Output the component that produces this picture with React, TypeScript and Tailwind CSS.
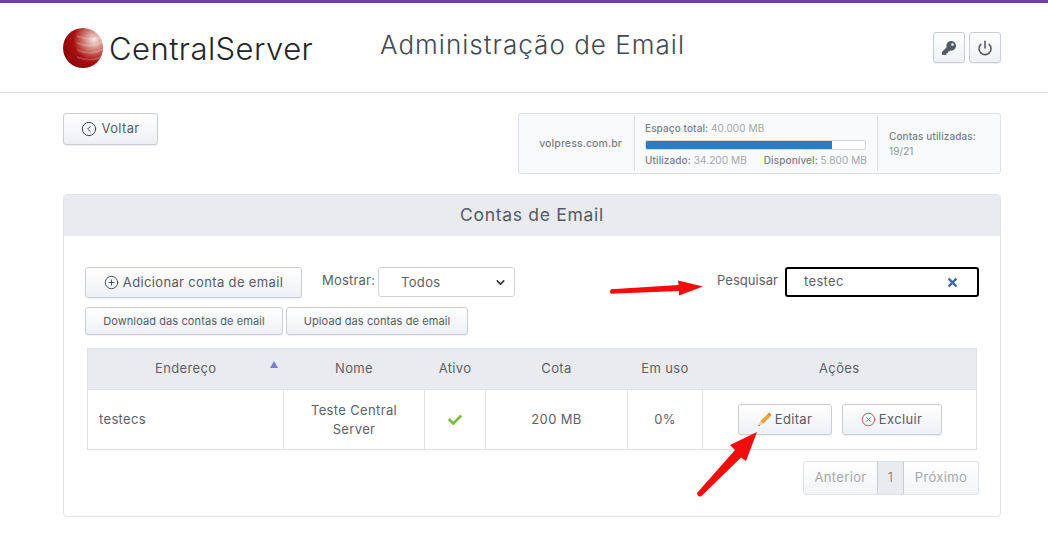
import { ChevronDown, CircleChevronLeft, CirclePlus, CircleX, Power } from 'lucide-react';
import { FaCheck, FaKey, FaTimes } from 'react-icons/fa';

const btn =
  'inline-flex items-center justify-center rounded-[3px] border border-[#c9ced6] bg-gradient-to-b from-white to-[#eef0f4] text-[#565b66] shadow-[0_1px_1px_rgba(0,0,0,0.06)]';

const Logo = () => (
  <div className="flex items-center">
    <svg width="40" height="40" viewBox="0 0 40 40">
      <defs>
        <radialGradient id="ball" cx="78%" cy="30%" r="85%">
          <stop offset="0%" stopColor="#f6e4e0" />
          <stop offset="30%" stopColor="#d2807a" />
          <stop offset="62%" stopColor="#a80f10" />
          <stop offset="100%" stopColor="#8a0607" />
        </radialGradient>
        <clipPath id="ballClip">
          <circle cx="20" cy="20" r="20" />
        </clipPath>
      </defs>
      <circle cx="20" cy="20" r="20" fill="url(#ball)" />
      <g clipPath="url(#ballClip)" fill="none" stroke="#ffffff" strokeOpacity="0.2" strokeWidth="1.6">
        <path d="M14 8 Q28 14 40 8" />
        <path d="M14 15 Q28 21 40 14" />
        <path d="M14 22 Q28 28 40 21" />
        <path d="M14 29 Q28 35 40 28" />
      </g>
    </svg>
    <span className="ml-[6px] text-[31px] leading-none tracking-[0.45px] text-[#24262b] [font-family:Inter,sans-serif] font-light">
      CentralServer
    </span>
  </div>
);

const Pencil = () => (
  <svg width="15" height="15" viewBox="0 0 14 14">
    <path d="M3 8.6 L9.8 1.8 L12.4 4.4 L5.6 11.2 Z" fill="#e9a83c" />
    <path d="M9.8 1.8 L10.7 0.9 Q11.3 0.5 11.9 1 L13 2.1 Q13.4 2.7 13 3.3 L12.4 4.4 Z" fill="#d98a2e" />
    <path d="M3 8.6 L5.6 11.2 L1 13.2 Z" fill="#e8d3a8" />
    <path d="M1.9 11.7 L2.6 12.5 L1 13.2 Z" fill="#555" />
  </svg>
);

const App = () => {
  return (
    <div className="relative h-[542px] w-[1048px] overflow-hidden bg-white tracking-[0.35px] text-[#5c616b] [font-family:Inter,'Liberation_Sans',sans-serif]">
      <div className="h-[3px] bg-[#6f42a6]" />
      <header className="flex h-[90px] items-start border-b border-[#dddddd] pl-[63px] pr-[47px]">
        <div className="mt-[25px] w-[317px]">
          <Logo />
        </div>
        <h1 className="mt-[25px] text-[26px] leading-[34px] font-light tracking-[1.03px] text-[#424955]">
          Administração de Email
        </h1>
        <div className="mt-[29px] ml-auto flex gap-[4px]">
          <button className={`${btn} h-[31px] w-[32px] text-[#3f4654]`}>
            <FaKey size={14} />
          </button>
          <button className={`${btn} h-[31px] w-[32px] text-[#3f4654]`}>
            <Power size={16} strokeWidth={2.4} />
          </button>
        </div>
      </header>

      <main className="pr-[47px] pl-[63px]">
        <div className="mt-[20px] flex items-start justify-between">
          <button className={`${btn} h-[32px] w-[95px] gap-[4px] text-[13px]`}>
            <CircleChevronLeft size={16} strokeWidth={1.5} className="text-[#3f4654]" />
            Voltar
          </button>
          <div className="flex h-[61px] w-[483px] items-center rounded-[3px] border border-[#dfe2e7] bg-[#f9fafc] py-[2px] text-[10px] font-medium tracking-[0.1px] text-[#7a7e85]">
            <div className="w-[115px] pr-[12px] text-right text-[10.5px]">volpress.com.br</div>
            <div className="flex h-full w-[244px] flex-col border-x border-[#d8dbe0] px-[10px] pt-[6px]">
              <div className="leading-[13px]">
                Espaço total: <span className="font-normal text-[#a3a6ab]">40.000 MB</span>
              </div>
              <div className="mt-[5px] h-[10px] w-[221px] overflow-hidden rounded-[2px] border border-[#d6d8dc] bg-white">
                <div className="h-full w-[85%] bg-[#337ab7]" />
              </div>
              <div className="mt-[4px] flex w-[222px] justify-between leading-[13px]">
                <span>
                  Utilizado: <span className="font-normal text-[#a3a6ab]">34.200 MB</span>
                </span>
                <span>
                  Disponível: <span className="font-normal text-[#a3a6ab]">5.800 MB</span>
                </span>
              </div>
            </div>
            <div className="pl-[11px] leading-[15px]">
              <div>Contas utilizadas:</div>
              <div className="font-normal text-[#8d9096]">19/21</div>
            </div>
          </div>
        </div>

        <section className="mt-[20px] h-[323px] rounded-[4px] border border-[#dfe2e7]">
          <div className="flex h-[41px] items-center justify-center bg-[#e9ebf0] text-[17.5px] tracking-[0.7px] text-[#555a64]">
            Contas de Email
          </div>

          <div className="flex justify-between pt-[31px] pr-[21px] pl-[21px]">
            <div>
              <div className="flex items-start">
                <button className={`${btn} h-[31px] w-[217px] gap-[4px] text-[13px]`}>
                  <CirclePlus size={15} strokeWidth={1.5} className="text-[#3f4654]" />
                  Adicionar conta de email
                </button>
                <span className="ml-[20px] w-[56px] text-[13px] leading-[26px] tracking-[0.2px]">Mostrar:</span>
                <div className="relative h-[30px] w-[137px] rounded-[3px] border border-[#d0d3d8] bg-white pt-[1px] text-[13px]">
                  <select className="h-full w-full appearance-none bg-transparent pl-[22px] outline-none">
                    <option>Todos</option>
                  </select>
                  <ChevronDown size={13} strokeWidth={3} className="pointer-events-none absolute top-[8px] right-[7px] text-[#333]" />
                </div>
              </div>
              <div className="mt-[9px] flex gap-[3px] text-[11px] tracking-[0.1px]">
                <button className={`${btn} h-[28px] w-[198px]`}>Download das contas de email</button>
                <button className={`${btn} h-[28px] w-[182px]`}>Upload das contas de email</button>
              </div>
            </div>
            <div className="flex items-start">
              <span className="mr-[7px] text-[13px] leading-[26px] tracking-[0.05px]">Pesquisar</span>
              <div className="flex h-[30px] w-[194px] items-center justify-between rounded-[3px] border-2 border-black pr-[18px] pl-[17px] text-[13px]">
                testec
                <FaTimes size={13} className="text-[#44699b]" />
              </div>
            </div>
          </div>

          <div className="mx-[23px] mt-[13px]">
            <table className="w-[890px] table-fixed border-collapse border border-[#dfe2e7] text-[13px]">
              <colgroup>
                <col className="w-[196px]" />
                <col className="w-[141px]" />
                <col className="w-[61px]" />
                <col className="w-[142px]" />
                <col className="w-[75px]" />
                <col />
              </colgroup>
              <thead>
                <tr className="h-[41px] bg-[#e9ebf0] font-normal">
                  <th className="relative font-normal">
                    Endereço
                    <span className="absolute top-[12px] right-[6px] h-0 w-0 border-x-[4px] border-b-[7px] border-x-transparent border-b-[#7b7bd1]" />
                  </th>
                  <th className="font-normal">Nome</th>
                  <th className="font-normal">Ativo</th>
                  <th className="font-normal">Cota</th>
                  <th className="font-normal">Em uso</th>
                  <th className="font-normal">Ações</th>
                </tr>
              </thead>
              <tbody>
                <tr className="h-[60px] [&>td]:border [&>td]:border-[#dfe2e7]">
                  <td className="pl-[11px]">testecs</td>
                  <td className="px-[20px] text-center leading-[19px]">Teste Central Server</td>
                  <td>
                    <FaCheck size={14} className="mx-auto text-[#7fbf3f]" />
                  </td>
                  <td className="text-center">200 MB</td>
                  <td className="text-center">0%</td>
                  <td>
                    <div className="flex justify-center gap-[10px]">
                      <button className={`${btn} h-[31px] w-[94px] gap-[3px]`}>
                        <Pencil />
                        Editar
                      </button>
                      <button className={`${btn} h-[31px] w-[100px] gap-[3px]`}>
                        <CircleX size={15} strokeWidth={1.5} className="text-[#c9474a]" />
                        Excluir
                      </button>
                    </div>
                  </td>
                </tr>
              </tbody>
            </table>
            <div className="mt-[11px] -mr-[2px] flex justify-end">
              <div className="flex h-[34px] w-[176px] overflow-hidden rounded-[3px] border border-[#dfe2e7] bg-gradient-to-b from-white to-[#f1f3f6] text-[13px] text-[#a5a8ad]">
                <span className="flex w-[73px] items-center justify-center">Anterior</span>
                <span className="flex w-[27px] items-center justify-center border-x border-[#c9ced6] bg-[#e9ebf0] font-light text-[#6d7178]">1</span>
                <span className="flex flex-1 items-center justify-center">Próximo</span>
              </div>
            </div>
          </div>
        </section>
      </main>

      {/* setas vermelhas da anotacao */}
      <svg className="absolute top-0 left-0" width="1048" height="542" viewBox="0 0 1048 542" fill="#f30d0d" pointerEvents="none">
        <path d="M611 289.2 Q609 291.5 611 293.8 L679 291 L679 295.5 L703 286.5 L678 280.5 L678.6 285 Z" />
        <path d="M697 493 Q697.5 497 701 496.5 L741 457.5 L746 461 L757 432 L730 445 L735 450 Z" />
      </svg>
    </div>
  );
};

export default App;
